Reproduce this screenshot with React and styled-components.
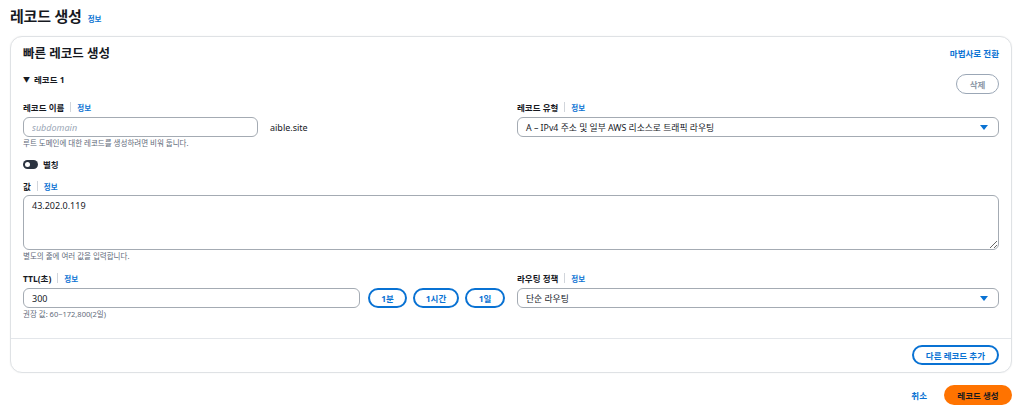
import React, { useState } from 'react';
import styled, { createGlobalStyle } from 'styled-components';

const GlobalStyle = createGlobalStyle`
  html, body {
    margin: 0;
    padding: 0;
    background: #ffffff;
  }
  body {
    font-family: "Noto Sans", "Noto Sans CJK KR", sans-serif;
    color: #16191f;
    font-size: 9px;
  }
  * { box-sizing: border-box; }
`;

const Page = styled.div`
  padding: 6px 1px 0 10px;
`;

const PageHeader = styled.div`
  display: flex;
  align-items: baseline;
  gap: 6px;
  height: 30px;
`;

const PageTitle = styled.h1`
  margin: 0;
  font-size: 15px;
  line-height: 20px;
  font-weight: 700;
  letter-spacing: -0.2px;
  color: #16191f;
`;

const InfoLink = styled.a`
  color: #0972d3;
  font-size: 7.5px;
  font-weight: 700;
  text-decoration: none;
  cursor: pointer;
`;

const Card = styled.section`
  background: #fff;
  border: 1px solid #dfe2e5;
  border-radius: 12px;
  box-shadow: 0 0 2px rgba(0, 7, 22, 0.06);
`;

const CardHeader = styled.div`
  display: flex;
  align-items: flex-start;
  justify-content: space-between;
  padding: 9px 12px 0 12px;
  height: 28px;
`;

const CardTitle = styled.h2`
  margin: 0;
  font-size: 12.5px;
  line-height: 16px;
  font-weight: 700;
`;

const TextLink = styled.a`
  color: #0972d3;
  font-weight: 700;
  font-size: 8.5px;
  line-height: 11px;
  text-decoration: none;
  cursor: pointer;
  padding-top: ${p => p.$pt || 0}px;
`;

const CardBody = styled.div`
  padding: 9px 12px 19px 12px;
`;

const RecordHead = styled.div`
  display: flex;
  justify-content: space-between;
  align-items: flex-start;
  height: 27px;
`;

const Expander = styled.div`
  display: flex;
  align-items: center;
  gap: 4px;
  font-size: 8.5px;
  font-weight: 700;
  line-height: 11px;
`;

const Caret = styled.span`
  font-size: 7px;
  line-height: 11px;
`;

const PillButton = styled.button`
  font-family: inherit;
  font-size: 8.5px;
  font-weight: 700;
  height: 20px;
  padding: 0 ${p => p.$px || 12}px;
  border-radius: 20px;
  background: #fff;
  border: ${p => (p.$muted ? '1px solid #9ba7b6' : '2px solid #0972d3')};
  color: ${p => (p.$muted ? '#8d99a8' : '#0972d3')};
  cursor: pointer;
  white-space: nowrap;
  min-width: ${p => p.$w || 0}px;
  margin-left: ${p => p.$ml || 0}px;
`;

const Columns = styled.div`
  display: grid;
  grid-template-columns: 482px 482px;
  column-gap: 12px;
`;

const Field = styled.div`
  display: flex;
  flex-direction: column;
  margin-top: ${p => p.$mt || 0}px;
`;

const LabelRow = styled.div`
  display: flex;
  align-items: center;
  height: 12px;
  margin-bottom: ${p => p.$mb ?? 4}px;
`;

const Label = styled.span`
  font-weight: 700;
  font-size: 8.5px;
  color: #16191f;
`;

const Sep = styled.span`
  width: 1px;
  height: 10px;
  background: #d1d5db;
  margin: 0 6px;
`;

const InputRow = styled.div`
  display: flex;
  align-items: center;
  gap: ${p => p.$gap || 12}px;
`;

const TextInput = styled.input`
  font-family: inherit;
  font-size: 9px;
  height: 20px;
  width: ${p => p.$w}px;
  border: 1px solid #a4abb3;
  border-radius: 6px;
  padding: 0 8px;
  color: #16191f;
  outline: none;
  &::placeholder {
    color: #9ba7b6;
    font-style: italic;
  }
`;

const Suffix = styled.span`
  font-size: 9px;
  color: #16191f;
`;

const Helper = styled.div`
  font-size: 7.5px;
  line-height: 10px;
  color: #5f6b7a;
  margin-top: 1px;
`;

const ToggleRow = styled.div`
  display: flex;
  align-items: center;
  gap: 5px;
  height: 12px;
  margin-top: 10px;
  font-size: 8.5px;
  font-weight: 700;
`;

const ToggleTrack = styled.span`
  position: relative;
  width: 15px;
  height: 9px;
  border-radius: 5px;
  background: #2b3340;
`;

const ToggleKnob = styled.span`
  position: absolute;
  top: 2px;
  left: 2px;
  width: 5px;
  height: 5px;
  border-radius: 50%;
  background: #fff;
`;

const TextArea = styled.textarea`
  font-family: inherit;
  font-size: 9px;
  width: 976px;
  height: 55px;
  border: 1px solid #a4abb3;
  border-radius: 6px;
  padding: 3px 8px;
  color: #16191f;
  outline: none;
  resize: vertical;
  display: block;
`;

const SelectBox = styled.div`
  display: flex;
  align-items: center;
  justify-content: space-between;
  height: 20px;
  border: 1px solid #a4abb3;
  border-radius: 6px;
  padding: 0 8px;
  font-size: 8.8px;
  color: #16191f;
  cursor: pointer;
`;

const SelectCaret = styled.span`
  width: 0;
  height: 0;
  border-left: 4px solid transparent;
  border-right: 4px solid transparent;
  border-top: 5px solid #0972d3;
  margin-right: 2px;
`;

const Divider = styled.div`
  height: 1px;
  background: #e3e6ea;
`;

const CardFooter = styled.div`
  display: flex;
  justify-content: flex-end;
  padding: 6px 12px 7px 12px;
`;

const Actions = styled.div`
  display: flex;
  justify-content: flex-end;
  align-items: center;
  gap: 17px;
  margin-top: 12px;
`;

const PrimaryButton = styled.button`
  font-family: inherit;
  font-size: 8.5px;
  font-weight: 700;
  height: 20px;
  width: 68px;
  border: none;
  border-radius: 20px;
  background: #ff7300;
  color: #16191f;
  cursor: pointer;
`;

const FieldLabel = ({ children, mb }) => (
  <LabelRow $mb={mb}>
    <Label>{children}</Label>
    <Sep />
    <InfoLink>정보</InfoLink>
  </LabelRow>
);

const Select = ({ value }) => (
  <SelectBox>
    <span>{value}</span>
    <SelectCaret />
  </SelectBox>
);

const App = () => {
  const [value, setValue] = useState('43.202.0.119');
  const [ttl, setTtl] = useState('300');

  return (
    <>
      <GlobalStyle />
      <Page>
        <PageHeader>
          <PageTitle>레코드 생성</PageTitle>
          <InfoLink>정보</InfoLink>
        </PageHeader>

        <Card>
          <CardHeader>
            <CardTitle>빠른 레코드 생성</CardTitle>
            <TextLink $pt={2}>마법사로 전환</TextLink>
          </CardHeader>

          <CardBody>
            <RecordHead>
              <Expander>
                <Caret>▼</Caret>
                레코드 1
              </Expander>
              <PillButton $muted $w={43}>삭제</PillButton>
            </RecordHead>

            <Columns>
              <Field>
                <FieldLabel>레코드 이름</FieldLabel>
                <InputRow>
                  <TextInput $w={235} placeholder="subdomain" />
                  <Suffix>aible.site</Suffix>
                </InputRow>
                <Helper>루트 도메인에 대한 레코드를 생성하려면 비워 둡니다.</Helper>
              </Field>
              <Field>
                <FieldLabel>레코드 유형</FieldLabel>
                <Select value="A – IPv4 주소 및 일부 AWS 리소스로 트래픽 라우팅" />
              </Field>
            </Columns>

            <ToggleRow>
              <ToggleTrack>
                <ToggleKnob />
              </ToggleTrack>
              별칭
            </ToggleRow>

            <Field $mt={10}>
              <FieldLabel mb={3}>값</FieldLabel>
              <TextArea value={value} onChange={e => setValue(e.target.value)} />
              <Helper>별도의 줄에 여러 값을 입력합니다.</Helper>
            </Field>

            <Columns>
              <Field $mt={11}>
                <FieldLabel>TTL(초)</FieldLabel>
                <InputRow $gap={6}>
                  <TextInput $w={337} value={ttl} onChange={e => setTtl(e.target.value)} />
                  <PillButton $w={39} $px={8} $ml={2}>1분</PillButton>
                  <PillButton $w={46} $px={8}>1시간</PillButton>
                  <PillButton $w={40} $px={8}>1일</PillButton>
                </InputRow>
                <Helper>권장 값: 60~172,800(2일)</Helper>
              </Field>
              <Field $mt={11}>
                <FieldLabel>라우팅 정책</FieldLabel>
                <Select value="단순 라우팅" />
              </Field>
            </Columns>
          </CardBody>

          <Divider />

          <CardFooter>
            <PillButton $w={87}>다른 레코드 추가</PillButton>
          </CardFooter>
        </Card>

        <Actions>
          <TextLink>취소</TextLink>
          <PrimaryButton>레코드 생성</PrimaryButton>
        </Actions>
      </Page>
    </>
  );
};

export default App;
